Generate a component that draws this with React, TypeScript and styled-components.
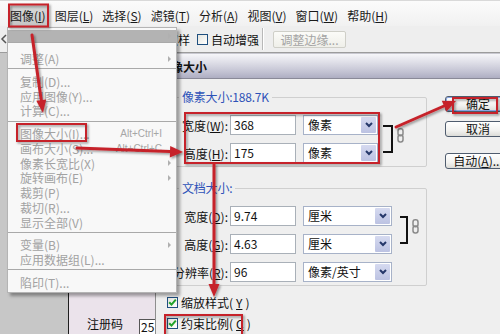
import React from "react";
import styled, { createGlobalStyle } from "styled-components";

const FONT = `"Noto Sans CJK SC", "Liberation Sans", sans-serif`;

const Global = createGlobalStyle`
  html, body { margin: 0; padding: 0; }
  body { width: 500px; height: 334px; overflow: hidden; background: #ffffff; font-family: ${FONT}; font-size: 12px; }
`;

const Page = styled.div`
  position: relative;
  width: 500px;
  height: 334px;
  overflow: hidden;
  display: flex;
  flex-direction: column;
  font-family: ${FONT};
  font-size: 12px;
  color: #111;
`;

const Key = styled.span`
  text-decoration: underline;
  text-underline-offset: 1px;
`;

/* ---------- menu bar ---------- */
const MenuBar = styled.div`
  height: 26px;
  box-sizing: border-box;
  padding: 4px 0 0 8px;
  display: flex;
  gap: 5px;
  background: linear-gradient(#fbfbfb, #f1f1f1);
  border-top: 1px solid #d9d9d9;
`;

const MenuTitle = styled.div<{ $active?: boolean }>`
  height: 22px;
  line-height: 22px;
  padding: 0 2px;
  color: #1a1a1a;
  background: ${(p) => (p.$active ? "linear-gradient(#d9d9d9, #c4c4c4)" : "transparent")};
  white-space: nowrap;
`;

/* ---------- tool options bar ---------- */
const ToolBar = styled.div`
  height: 27px;
  box-sizing: border-box;
  display: flex;
  align-items: center;
  background: #eeeeee;
  border-bottom: 1px solid #9c9c9c;
`;

const ToolGlyph = styled.svg`
  width: 8px;
  height: 12px;
  flex: none;
`;

const ToolOption = styled.label<{ $gap: number }>`
  display: flex;
  align-items: center;
  gap: 3px;
  margin-left: ${(p) => p.$gap}px;
  white-space: nowrap;
  color: #111;
`;

const ToolSeparator = styled.div`
  width: 1px;
  height: 22px;
  margin-left: 3px;
  background: #b8b8b8;
  border-right: 1px solid #ffffff;
`;

const DisabledButton = styled.div`
  margin-left: 9px;
  width: 73px;
  height: 17px;
  box-sizing: border-box;
  border: 1px solid #cfcfc8;
  border-radius: 2px;
  background: linear-gradient(#fbfbf8, #efefe9);
  color: #a4a4a4;
  line-height: 15px;
  text-align: center;
  white-space: nowrap;
`;

/* ---------- workspace ---------- */
const Workspace = styled.div`
  flex: 1;
  display: flex;
  min-height: 0;
`;

const GrayArea = styled.div`
  width: 68px;
  flex: none;
  background: #c7c7c7;
  border-right: 1px solid #1e1e1e;
`;

const SidePanel = styled.div`
  width: 86px;
  flex: none;
  background: #ebe3eb;
  display: flex;
  flex-direction: column;
  justify-content: flex-end;
  overflow: hidden;
`;

const SideRow = styled.div`
  display: flex;
  align-items: flex-end;
  padding-left: 18px;
  gap: 16px;
  height: 18px;
`;

const SideLabel = styled.span`
  line-height: 14px;
  margin-bottom: 3px;
  color: #111;
  white-space: nowrap;
`;

const SideInput = styled.div`
  width: 22px;
  height: 15px;
  flex: none;
  box-sizing: border-box;
  border: 1px solid #555;
  border-bottom: none;
  background: #fff;
  padding-left: 1px;
  line-height: 14px;
`;

/* ---------- dialog ---------- */
const Dialog = styled.div`
  flex: 1;
  min-width: 0;
  display: flex;
  flex-direction: column;
  border-left: 1px solid #8e8e8e;
  background: #efefef;
  overflow: hidden;
`;

const TitleBar = styled.div`
  height: 26px;
  flex: none;
  box-sizing: border-box;
  padding-left: 3px;
  line-height: 26px;
  font-weight: bold;
  color: #111;
  background: linear-gradient(#f6f6f9 0%, #e2e2ea 30%, #c2c2d2 75%, #aeaec2 100%);
  border-top: 1px solid #c8c8d0;
  border-bottom: 1px solid #8a8a98;
`;

const DialogBody = styled.div`
  display: flex;
  gap: 18px;
  padding: 11px 0 0 9px;
`;

const MainColumn = styled.div`
  width: 262px;
  flex: none;
  display: flex;
  flex-direction: column;
`;

const Group = styled.fieldset<{ $top?: number }>`
  margin: ${(p) => p.$top ?? 0}px 0 0 0;
  padding: 11px 0 3px 0;
  border: 1px solid #cfcfcf;
  border-radius: 2px;
  min-width: 0;
`;

const Legend = styled.legend`
  margin-left: 13px;
  padding: 0 3px;
  line-height: 14px;
  color: #2d52b8;
  white-space: nowrap;
  letter-spacing: -0.2px;
`;

const FieldBlock = styled.div`
  display: flex;
  align-items: flex-start;
`;

const FieldRows = styled.div`
  display: flex;
  flex-direction: column;
  gap: 8px;
`;

const FieldRow = styled.div<{ $selectW: number }>`
  display: grid;
  grid-template-columns: 64px 66px ${(p) => p.$selectW}px;
  align-items: center;
  height: 20px;
`;

const FieldLabel = styled.span`
  text-align: right;
  padding-right: 2px;
  white-space: nowrap;
  color: #111;
`;

const TextInput = styled.div`
  height: 20px;
  box-sizing: border-box;
  border: 1px solid #a9b0b8;
  background: #fff;
  padding-left: 3px;
  line-height: 18px;
  color: #111;
`;

const Select = styled.div`
  margin-left: 7px;
  height: 20px;
  box-sizing: border-box;
  border: 1px solid #a7b2c8;
  background: #fff;
  display: flex;
`;

const SelectText = styled.span`
  flex: 1;
  padding-left: 4px;
  line-height: 18px;
  white-space: nowrap;
  color: #111;
`;

const DropButton = styled.span`
  width: 15px;
  margin: 1px;
  flex: none;
  border-radius: 1px;
  background: linear-gradient(#d6daf0, #bcc2e2);
  display: flex;
  align-items: center;
  justify-content: center;
`;

const Bracket = styled.div<{ $gap: number; $w: number }>`
  margin: 10px 0 0 ${(p) => p.$gap}px;
  width: ${(p) => p.$w}px;
  height: 28px;
  flex: none;
  box-sizing: border-box;
  border: 2px solid #111;
  border-left: none;
`;

const ChainIcon = styled.svg`
  margin: 13px 0 0 4px;
  flex: none;
`;

const CheckRow = styled.label<{ $top: number }>`
  margin-top: ${(p) => p.$top}px;
  height: 16px;
  padding-left: 2px;
  display: flex;
  align-items: center;
  gap: 3px;
  white-space: nowrap;
  color: #111;
`;

const CheckBox = styled.span`
  width: 11px;
  height: 11px;
  flex: none;
  box-sizing: border-box;
  border: 1px solid #1f4f7f;
  background: linear-gradient(135deg, #e4e4de, #ffffff);
  display: flex;
  align-items: center;
  justify-content: center;
`;

const ButtonColumn = styled.div`
  width: 66px;
  flex: none;
  display: flex;
  flex-direction: column;
  padding-top: 6px;
`;

const DialogButton = styled.div<{ $top: number; $default?: boolean }>`
  margin-top: ${(p) => p.$top}px;
  height: 16px;
  box-sizing: border-box;
  border: 1px solid #4f5c6e;
  border-radius: 3px;
  background: linear-gradient(#ffffff, #f2f2f0 60%, #dcdcd8);
  box-shadow: ${(p) => (p.$default ? "inset 0 0 0 1px #86a4e2" : "none")};
  text-align: center;
  line-height: 14px;
  color: #111;
  white-space: nowrap;
`;

/* ---------- drop-down menu ---------- */
const DropMenu = styled.div`
  position: absolute;
  left: 7px;
  top: 27px;
  width: 170px;
  box-sizing: border-box;
  padding: 2px 0 3px 0;
  background: #f8f8f8;
  border: 1px solid #b4b4b4;
  box-shadow: 3px 3px 3px rgba(0, 0, 0, 0.35);
`;

const HighlightRow = styled.div`
  height: 12px;
  background: #b3b3b3;
  display: flex;
  justify-content: flex-end;
  align-items: center;
  padding-right: 5px;
`;

const MenuSep = styled.div<{ $tight?: boolean }>`
  height: 1px;
  background: #a9a9a9;
  margin: ${(p) => (p.$tight ? "0 0 7px 0" : "3.5px 0")};
`;

const MenuEntry = styled.div`
  display: grid;
  grid-template-columns: 1fr auto 14px;
  align-items: center;
  height: 14.75px;
  padding-left: 12px;
  color: #a2a2a2;
  white-space: nowrap;
`;

const Shortcut = styled.span`
  font-family: "Liberation Sans", sans-serif;
  font-size: 10px;
  color: #a6a6a6;
`;

const SubArrow = styled.span`
  justify-self: center;
  width: 0;
  height: 0;
  border-top: 3px solid transparent;
  border-bottom: 3px solid transparent;
  border-left: 3px solid #b0b0b0;
`;

const Overlay = styled.svg`
  position: absolute;
  left: 0;
  top: 0;
  pointer-events: none;
`;

/* ---------- data ---------- */
const menuBarItems = [
  { label: "图像", key: "I", active: true },
  { label: "图层", key: "L" },
  { label: "选择", key: "S" },
  { label: "滤镜", key: "T" },
  { label: "分析", key: "A" },
  { label: "视图", key: "V" },
  { label: "窗口", key: "W" },
  { label: "帮助", key: "H" },
];

type Entry = { text?: string; shortcut?: string; sub?: boolean; sep?: boolean };

const menuEntries: Entry[] = [
  { text: "调整(A)", sub: true },
  { sep: true },
  { text: "复制(D)..." },
  { text: "应用图像(Y)..." },
  { text: "计算(C)..." },
  { sep: true },
  { text: "图像大小(I)...", shortcut: "Alt+Ctrl+I" },
  { text: "画布大小(S)...", shortcut: "Alt+Ctrl+C" },
  { text: "像素长宽比(X)", sub: true },
  { text: "旋转画布(E)", sub: true },
  { text: "裁剪(P)" },
  { text: "裁切(R)..." },
  { text: "显示全部(V)" },
  { sep: true },
  { text: "变量(B)", sub: true },
  { text: "应用数据组(L)..." },
  { sep: true },
  { text: "陷印(T)..." },
];

type Field = { name: string; key: string; value: string; unit: string };

const pixelFields: Field[] = [
  { name: "宽度", key: "W", value: "368", unit: "像素" },
  { name: "高度", key: "H", value: "175", unit: "像素" },
];

const docFields: Field[] = [
  { name: "宽度", key: "D", value: "9.74", unit: "厘米" },
  { name: "高度", key: "G", value: "4.63", unit: "厘米" },
  { name: "分辨率", key: "R", value: "96", unit: "像素/英寸" },
];

/* ---------- small drawings ---------- */
const Chevron = () => (
  <svg width="8" height="6" viewBox="0 0 8 6">
    <path d="M1 1 L4 4 L7 1" stroke="#26386a" strokeWidth="2" fill="none" />
  </svg>
);

const Chain = () => (
  <ChainIcon width="7" height="15" viewBox="0 0 7 15">
    <rect x="1" y="0.8" width="5" height="7" rx="2.2" fill="none" stroke="#8a8a8a" strokeWidth="1.5" />
    <rect x="1" y="7" width="5" height="7" rx="2.2" fill="none" stroke="#8a8a8a" strokeWidth="1.5" />
  </ChainIcon>
);

const Tick = () => (
  <svg width="9" height="9" viewBox="0 0 9 9">
    <path d="M1.2 4.2 L3.5 6.6 L7.8 1.6" stroke="#21a32a" strokeWidth="2" fill="none" />
  </svg>
);

const FieldGroup = ({ fields, selectW, bracketGap, bracketW }: { fields: Field[]; selectW: number; bracketGap: number; bracketW: number }) => (
  <FieldBlock>
    <FieldRows>
      {fields.map((f) => (
        <FieldRow key={f.name + f.key} $selectW={selectW}>
          <FieldLabel>
            {f.name}(<Key>{f.key}</Key>):
          </FieldLabel>
          <TextInput>{f.value}</TextInput>
          <Select>
            <SelectText>{f.unit}</SelectText>
            <DropButton>
              <Chevron />
            </DropButton>
          </Select>
        </FieldRow>
      ))}
    </FieldRows>
    <Bracket $gap={bracketGap} $w={bracketW} />
    <Chain />
  </FieldBlock>
);

const RED = "#c6232b";

const Annotations = () => (
  <Overlay width="500" height="334" viewBox="0 0 500 334">
    <defs>
      <filter id="sh" x="-20%" y="-20%" width="140%" height="140%">
        <feDropShadow dx="1.5" dy="1.5" stdDeviation="1" floodColor="#000" floodOpacity="0.4" />
      </filter>
    </defs>
    <g filter="url(#sh)">
      <g stroke={RED} strokeWidth="2" fill="none">
        <rect x="9" y="4.5" width="39" height="22" />
        <rect x="17" y="124" width="69" height="17" />
        <rect x="185" y="113" width="194" height="50" />
        <rect x="453" y="98" width="44" height="15" />
        <rect x="165" y="315" width="77" height="20" />
      </g>
      <g stroke={RED} strokeWidth="3" fill="none" strokeLinecap="round">
        <line x1="32" y1="35" x2="41.2" y2="100" />
        <line x1="77" y1="148" x2="170" y2="151.5" />
        <line x1="214" y1="164" x2="214" y2="284" />
        <line x1="396" y1="127" x2="444" y2="106" />
      </g>
      <g fill={RED}>
        <polygon points="43,113 46.2,99.4 36.3,100.8" />
        <polygon points="183,152 169.8,157.5 170.2,146" />
        <polygon points="214,297 208.5,284 219.5,284" />
        <polygon points="456,101 446.5,111.5 441.8,100.8" />
      </g>
    </g>
  </Overlay>
);

export default function App() {
  return (
    <>
      <Global />
      <Page>
        <MenuBar>
          {menuBarItems.map((m) => (
            <MenuTitle key={m.label} $active={m.active}>
              {m.label}(<Key>{m.key}</Key>)
            </MenuTitle>
          ))}
        </MenuBar>

        <ToolBar>
          <ToolGlyph viewBox="0 0 8 12">
            <path d="M6 2 L2 6 L6 10" stroke="#555" strokeWidth="1.5" fill="none" />
          </ToolGlyph>
          <ToolOption $gap={84}>
            <CheckBox />
            对所有图层取样
          </ToolOption>
          <ToolOption $gap={7}>
            <CheckBox />
            自动增强
          </ToolOption>
          <ToolSeparator />
          <DisabledButton>调整边缘...</DisabledButton>
        </ToolBar>

        <Workspace>
          <GrayArea />
          <SidePanel>
            <SideRow>
              <SideLabel>注册码</SideLabel>
              <SideInput>25</SideInput>
            </SideRow>
          </SidePanel>
          <Dialog>
            <TitleBar>图像大小</TitleBar>
            <DialogBody>
              <MainColumn>
                <Group>
                  <Legend>像素大小:188.7K</Legend>
                  <FieldGroup fields={pixelFields} selectW={82} bracketGap={5} bracketW={10} />
                </Group>
                <Group $top={14}>
                  <Legend>文档大小:</Legend>
                  <FieldGroup fields={docFields} selectW={96} bracketGap={8} bracketW={8} />
                </Group>
                <CheckRow $top={8}>
                  <CheckBox>
                    <Tick />
                  </CheckBox>
                  缩放样式(<Key>Y</Key>)
                </CheckRow>
                <CheckRow $top={5}>
                  <CheckBox>
                    <Tick />
                  </CheckBox>
                  约束比例(<Key>C</Key>)
                </CheckRow>
              </MainColumn>
              <ButtonColumn>
                <DialogButton $top={0} $default>
                  确定
                </DialogButton>
                <DialogButton $top={9}>取消</DialogButton>
                <DialogButton $top={16}>
                  自动(<Key>A</Key>)...
                </DialogButton>
              </ButtonColumn>
            </DialogBody>
          </Dialog>
        </Workspace>

        <DropMenu>
          <HighlightRow>
            <SubArrow />
          </HighlightRow>
          <MenuSep $tight />
          {menuEntries.map((e, i) =>
            e.sep ? (
              <MenuSep key={i} />
            ) : (
              <MenuEntry key={i}>
                <span>{e.text}</span>
                {e.shortcut ? <Shortcut>{e.shortcut}</Shortcut> : <span />}
                {e.sub ? <SubArrow /> : <span />}
              </MenuEntry>
            )
          )}
        </DropMenu>

        <Annotations />
      </Page>
    </>
  );
}
